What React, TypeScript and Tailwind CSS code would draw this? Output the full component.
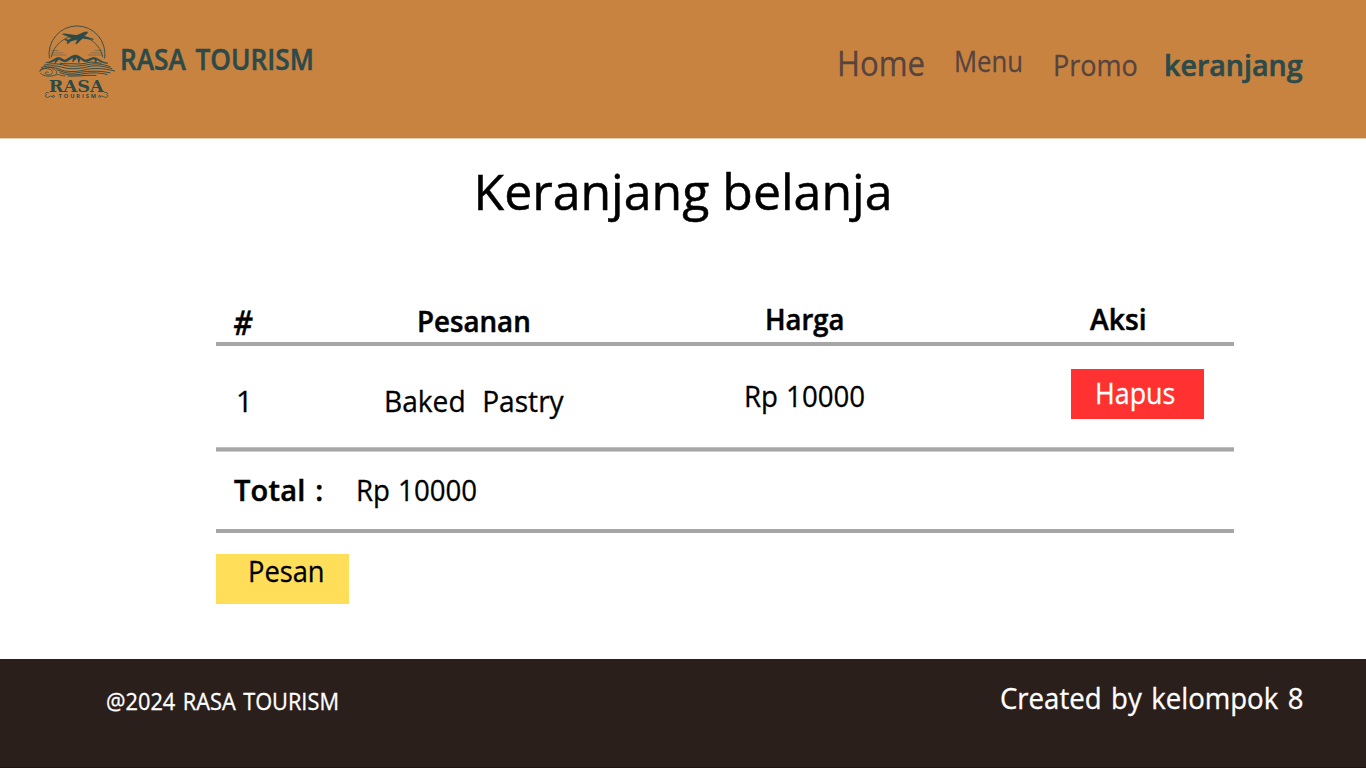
function Logo() {
  return (
    <svg
      viewBox="38 24 80 76"
      className="h-[76px] w-[80px] shrink-0 [-webkit-text-stroke:0px]"
      fill="none"
      stroke="#2b4a49"
      strokeLinecap="round"
      strokeLinejoin="round"
      aria-label="Rasa Tourism"
    >
      <path d="M49.3 58A28 28 0 1 1 104.7 58" strokeWidth="0.9" />
      <path d="M51.3 57A26.2 26.2 0 0 1 102.7 57" strokeWidth="0.8" />
      <g strokeWidth="0.5" opacity="0.75">
        <path d="M52 50.5H58M52 52.8H63M51.5 55H66M88 55H103M91 52.8H102.5M95 50.5H102" />
      </g>
      <path
        fill="#2b4a49"
        strokeWidth="0.2"
        d="M87.6 32.1C86.6 31.3 84 31.9 81.5 33.2L76.5 35.3L63.6 33.5L62.2 34.3L71.5 38L68.5 39.7L65.4 39.1L64.4 39.8L67.3 41.2L67 43.8L68.3 43.5L71 41.2L77.3 39.6L75.4 44L77 43.7L82.5 38.4L93 39.7L93.6 38.9L84 36.1C86.2 34.9 87.9 33.2 87.6 32.1Z"
      />
      <g fill="#2b4a49" strokeWidth="0.6">
        <path d="M46 62.6C51 62 54 58.7 57.5 57.5C60.2 57 62.5 59.2 64.5 60.1C68 59.1 71.5 55 75.3 55C79.5 55 82 59.1 85.5 60C89 59.8 91.5 57 94.5 57.4C98.5 58.2 101.5 62.1 108 63.2C102 63.6 98.5 60.5 96.3 59.2C97.3 60.7 95.8 61.5 95.4 62.8C95 61.5 95.8 60.3 94.4 58.9C92 58.8 89.5 61.2 86 61.8C83.6 61.8 81.5 59.5 79.5 58C81 60 79 61.3 78.8 62.8C77.8 61 78.6 59.2 76.8 57.2C76.6 59.2 73.6 60 72.8 62C72.2 60.2 73.8 58.7 72.8 57.8C70.3 59 68.3 61.5 65 62C62.3 61.5 60.2 59.6 58.4 58.9C58.8 60.8 55.9 61.3 55 63.2C54.5 61.6 56 60.2 55.4 60C53 61.8 50.5 63.1 46 62.6Z" />
      </g>
      <g strokeWidth="0.95">
        <path d="M44 65.3C52 62.7 58 63.8 65 65.4S81 66.2 88 64.6S102 64.1 110 66.5" />
        <path d="M60 63.2C65 64.4 70 63.4 74 63.8S84 64 88 62.6S98 63 101 63.4" />
        <path d="M41.5 67.5C50 64.8 57 65.7 64 67.7S82 68.4 89 66.6S103 66.3 112 68.6" />
        <path d="M40 70C45 66.5 55 67 60 69.4S75 72.4 84 70S104 68.3 114.5 71" />
        <path d="M57 69.8C63 72 69 74.2 77 72.8S98 70 110 72.8" />
        <path d="M60 72.5C66 75.3 74 75.4 82 74S98 72.3 107 74.4" />
        <path d="M68 76C76 76.6 84 75 96 75.4" />
      </g>
      <g strokeWidth="0.8">
        <path d="M39.8 71.5C41 68.5 47 67.5 51 69.8C55 72.3 51 76 46.8 74.8C43.5 73.8 45.5 70.9 48.2 72.3" />
        <path d="M40.5 73.2C42.5 75.8 48 77 53 75.7C57 74.7 58.5 73.6 61 75.4L65 76" />
        <path d="M52 68.5C57 69.8 57.8 72.6 55.8 74.2" />
      </g>
      <g fill="#2b4a49" stroke="none">
        <text
          x="48.7"
          y="91.8"
          fontSize="17"
          textLength="55"
          lengthAdjust="spacingAndGlyphs"
          className="font-['DejaVu_Serif',serif] font-bold"
        >
          RASA
        </text>
        <text
          x="58.6"
          y="98"
          fontSize="5.6"
          textLength="37.5"
          className="font-['Open_Sans',sans-serif] font-bold"
        >
          TOURISM
        </text>
      </g>
      <g strokeWidth="0.8">
        <path d="M48.3 92.6C45.8 91.8 44.6 93.6 46.6 94.6C44.2 95.2 45.3 97.6 47.6 97.3C49.5 97 50 95.6 51.5 96.2M52.2 96.6C52.2 95 54.5 95 54.5 96.4C54.4 97.5 52.8 97.5 52.2 96.6" />
        <path d="M104.6 92.6C107.2 91.8 108.4 93.6 106.6 94.6C108.9 95.2 107.8 97.6 105.4 97.3C103.5 97 103 95.6 101.5 96.2M100.8 96.6C100.8 95 98.5 95 98.5 96.4C98.6 97.5 100.2 97.5 100.8 96.6" />
      </g>
    </svg>
  );
}

export default function App() {
  return (
    <div className="flex h-[768px] w-[1366px] flex-col overflow-hidden bg-white font-['Open_Sans','Noto_Sans',sans-serif] text-[29px] leading-10 font-normal text-black [-webkit-text-stroke:0.3px]">
      <header className="flex h-[139px] shrink-0 items-start justify-between border-b border-[#e9ceb3] bg-[#c98341] text-[#56443f]">
        <div className="flex pt-6 pl-[38px]">
          <Logo />
          <span className="mt-[15px] ml-[2px] w-[205px] origin-left scale-x-[0.937] text-[28px] font-semibold whitespace-nowrap text-[#2b4a49] [-webkit-text-stroke:0.5px] [word-spacing:3px]">
            RASA TOURISM
          </span>
        </div>
        <nav className="flex w-[529px] whitespace-nowrap">
          <a className="mt-[43px] w-[117px] origin-left scale-x-[0.915] text-[34px]">Home</a>
          <a className="mt-[41px] w-[99px] origin-left scale-x-[0.885]">Menu</a>
          <a className="mt-[45px] w-[111px] origin-left scale-x-[0.932]">Promo</a>
          <a className="mt-[45px] w-[140px] origin-left scale-x-[0.987] font-semibold text-[#2b4a49] [-webkit-text-stroke:0.6px]">
            keranjang
          </a>
        </nav>
      </header>

      <main className="h-[520px] shrink-0">
        <h1 className="pt-[32px] text-center text-[50px] leading-10 [-webkit-text-stroke:0.5px]">
          Keranjang belanja
        </h1>

        <section className="mt-[89px] ml-[216px] w-[1018px] whitespace-pre">
          <div className="grid h-[46px] grid-cols-[150px_360px_328px_180px] items-start border-b-4 border-[#a6a6a6] font-semibold [-webkit-text-stroke:0.5px]">
            <span className="mt-[2px] ml-[18px] origin-left -skew-x-6 scale-x-[0.86] text-[34px]">#</span>
            <span className="mt-px ml-[51px] origin-left scale-x-[0.955]">Pesanan</span>
            <span className="-mt-px ml-[39px] origin-left scale-x-[0.945]">Harga</span>
            <span className="-mt-px ml-[36px] origin-left scale-x-[0.975]">Aksi</span>
          </div>

          <div className="grid h-[101px] grid-cols-[150px_360px_328px_180px] items-start">
            <span className="mt-[35px] ml-[20px]">1</span>
            <span className="mt-[35px] ml-[18px] origin-left scale-x-[0.97] [word-spacing:1px]">Baked  Pastry</span>
            <span className="mt-[30px] ml-[18px] origin-left scale-x-[0.953] [word-spacing:1px]">Rp 10000</span>
            <button className="mt-[23px] ml-[17px] flex h-[50px] w-[133px] items-start bg-[#ff3131] pt-1 pl-[24px] text-white">
              <span className="origin-left scale-x-[0.925]">Hapus</span>
            </button>
          </div>
          <div className="h-[5px] border-t border-b border-t-[#c0c0c0] border-b-[#cfcfcf] bg-[#a6a6a6]" />

          <div className="flex h-[81px] items-start border-b-4 border-[#a6a6a6] pt-[18px] pl-[18px]">
            <span className="w-[122px] font-semibold tracking-[0.2px] [-webkit-text-stroke:0.5px] [word-spacing:2px]">Total :</span>
            <span className="origin-left scale-x-[0.953] [word-spacing:1px]">Rp 10000</span>
          </div>

          <button className="mt-[21px] flex h-[50px] w-[133px] items-start bg-[#ffde59] pl-[32px]">
            <span className="-mt-[3px] origin-left scale-x-[0.94]">Pesan</span>
          </button>
        </section>
      </main>

      <footer className="flex h-[109px] shrink-0 items-start justify-between border-b border-[#23121a] bg-[#2b1f1c] whitespace-nowrap text-white">
        <span className="mt-[22px] ml-[106px] origin-left scale-x-[0.907] text-[24px] [word-spacing:2px]">
          @2024 RASA TOURISM
        </span>
        <span className="mt-[19px] w-[366px] origin-left scale-x-[0.95] [word-spacing:2.5px]">
          Created by kelompok 8
        </span>
      </footer>
    </div>
  );
}
